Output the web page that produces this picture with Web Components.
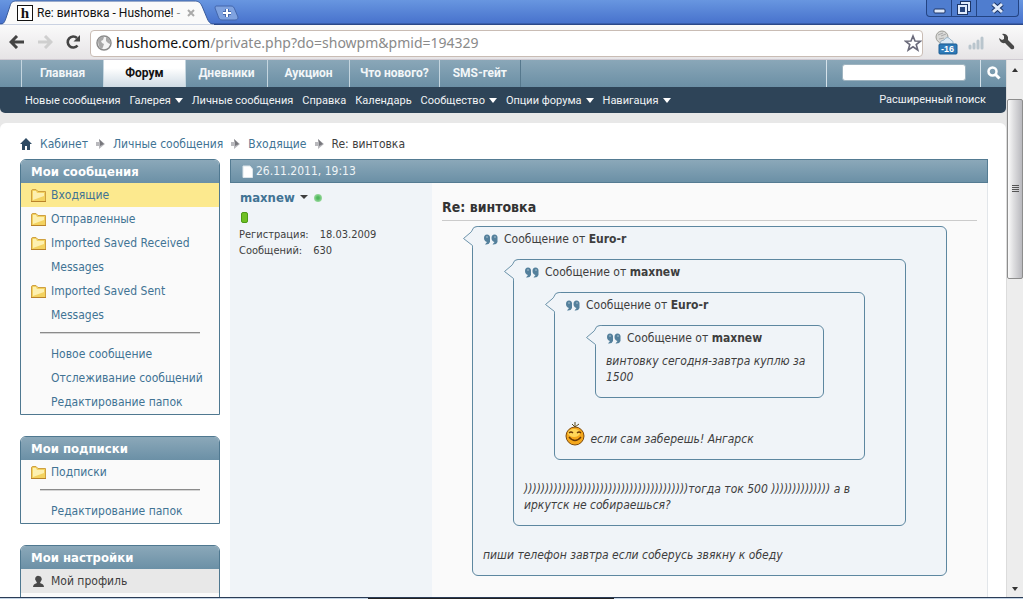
<!DOCTYPE html>
<html lang="ru">
<head>
<meta charset="utf-8">
<title>Re: винтовка - Hushome!</title>
<style>
html,body{margin:0;height:100%}
body{font:12px/16px "DejaVu Sans Condensed","DejaVu Sans",sans-serif;color:#3e3e3e;overflow:hidden}
</style>
</head>
<body>
<app-window></app-window>
<script>
const define = (name, css, html) => customElements.define(name, class extends HTMLElement {
  constructor() {
    super();
    this.attachShadow({mode: 'open'}).innerHTML =
      `<style>*{box-sizing:border-box}a{color:inherit;text-decoration:none}button{border:0;background:none;padding:0;font:inherit;color:inherit}svg{display:block}${css}</style>${html}`;
  }
});

/* ---------- browser chrome ---------- */
define('tab-strip', `
:host{display:flex;height:25px;background:linear-gradient(#6896e0,#4873cd 23px,#2b4888 24px,#2b4888);font:12px/16px Roboto,sans-serif;color:#111}
.tab{position:relative;width:214px;height:25px;display:flex;align-items:center;padding-left:17px}
.tab>svg.shape{position:absolute;left:0;top:0}
.tab>*{position:relative}
.fav{width:16px;height:16px;border:1px solid #111;background:#fff;margin-right:4px;display:grid;place-items:center;font:bold 15px/14px "Liberation Serif",serif}
.title{width:146px;white-space:nowrap}
.title i{font-style:normal;color:#888}
.x{width:10px;margin-left:4px}
.new{align-self:center}
.win{margin-left:auto;margin-right:4px;display:flex;height:17px;border:1px solid #234483;border-top:0;border-radius:0 0 4px 4px;background:#4f7dcf}
.win button{width:25px;height:16px;display:grid;place-items:center;border-right:1px solid #234483}
.win button:last-child{width:41px;border:0}`, `
<div class="tab">
<svg class="shape" width="214" height="25"><path d="M0 25C4 24 5 21 6 18L10 6C11 2 13 1 17 1H194C198 1 200 2 202 6L207 18C208 21 210 24 214 25Z" fill="#fafafa" stroke="#3a5c9c"/><path d="M0 24.5H214V26H0Z" fill="#fafafa"/></svg>
<span class="fav">h</span><span class="title">Re: винтовка - Hushome! <i>-</i></span>
<button class="x" aria-label="Закрыть вкладку"><svg width="8" height="8"><path d="M1 1L7 7M7 1L1 7" stroke="#aaa" stroke-width="2"/></svg></button></div>
<button class="new" aria-label="Новая вкладка"><svg width="27" height="16" viewBox="0 0 27 16"><path d="M2 1H17C19 1 20 2 21 5L24 12C24 14 23 15 21 15H8C6 15 5 14 4 11L1 3Q1 1 2 1" fill="#7fa2df" stroke="#4467ac"/><path d="M13 4V12M9 8H17" stroke="#4467ac" stroke-width="4"/><path d="M13 4V12M9 8H17" stroke="#fff" stroke-width="2"/></svg></button>
<div class="win">
<button aria-label="Свернуть"><svg width="13" height="12"><rect x="1" y="7" width="11" height="4" rx="1" fill="#dfeafb" stroke="#1c3567"/></svg></button>
<button aria-label="Восстановить"><svg width="14" height="14"><path d="M5 4V2H12V9H9" fill="none" stroke="#1c3567" stroke-width="4"/><path d="M5 4V2H12V9H9" fill="none" stroke="#dfeafb" stroke-width="2"/><rect x="2" y="5" width="7" height="7" fill="none" stroke="#1c3567" stroke-width="4"/><rect x="2" y="5" width="7" height="7" fill="#27457f" stroke="#dfeafb" stroke-width="2"/></svg></button>
<button aria-label="Закрыть"><svg width="13" height="12"><path d="M2 2L11 10M11 2L2 10" stroke="#1c3567" stroke-width="5"/><path d="M2 2L11 10M11 2L2 10" stroke="#dfeafb" stroke-width="3"/></svg></button>
</div>`);

define('tool-bar', `
:host{display:flex;align-items:center;height:35px;background:linear-gradient(#fafafa,#e6e4e6);padding-left:9px;padding-right:7px;border-bottom:1px solid #cfcad2}
.back{margin-right:12px}.fwd{margin-right:12px}.rel{margin-right:9px}
.omni{flex:1;height:27px;margin-top:2px;display:flex;align-items:center;border:1px solid #c9bcb4;border-radius:4px;background:#fff;padding:0 0 0 5px}
.url{flex:1;margin:0 4px;font:14px/22px "Noto Sans",sans-serif;color:#8a8a8a;white-space:nowrap}
.url b{font-weight:400;color:#111}
.ext{margin-left:11px}.bars{margin-left:10px}.wr{margin-left:14px}
.ext text{font:bold 9px "Liberation Sans",sans-serif;fill:#fff}`, `
<button class="back" aria-label="Назад"><svg width="16" height="14"><path d="M8 1L2 7L8 13M2 7H15" fill="none" stroke="#444" stroke-width="3"/></svg></button>
<button class="fwd" aria-label="Вперёд"><svg width="16" height="14"><path d="M8 1L14 7L8 13M14 7H1" fill="none" stroke="#cfcfcf" stroke-width="3"/></svg></button>
<button class="rel" aria-label="Обновить"><svg width="16" height="16"><path d="M12.500 11.500A5.500 5.500 0 1 1 12 4" fill="none" stroke="#444" stroke-width="2.600"/><path d="M15 1V7.500H8.500Z" fill="#444"/></svg></button>
<div class="omni">
<svg width="16" height="16"><circle cx="8" cy="8" r="7" fill="#f4f4f4" stroke="#8b8b8b" stroke-width="1.500"/><path d="M2 5C4 2 7 1 8 2L7 5L5 6L6 8L8 9L7 12L6 14C3 13 2 9 2 5M10 2C13 3 15 6 14 9L12 8L10 6Z" fill="#a8a8a8"/></svg>
<div class="url"><b>hushome.com</b>/private.php?do=showpm&amp;pmid=194329</div>
<button aria-label="В закладки"><svg width="18" height="18"><path d="M9 2L11 7L16.500 7.200L12.200 10.600L13.800 16L9 12.800L4.200 16L5.800 10.600L1.500 7.200L7 7Z" fill="#fff" stroke="#6a6a7a" stroke-width="1.600"/></svg></button>
</div>
<button class="ext" aria-label="Погода"><svg width="24" height="26"><circle cx="8" cy="8" r="6" fill="#d8d8d6" stroke="#9c9c96"/><path d="M4 6L9 4M5 10L10 9M7 7L12 5" stroke="#aaa"/><path d="M6 15Q6 11 10 11Q13 6 17 11Q20 12 19 15Z" fill="#dceaf5" stroke="#9bb6c9"/><rect x="5" y="15" width="18" height="10" rx="1" fill="#2d7ab8" stroke="#1c5d93"/><text x="7" y="23">-16</text></svg></button>
<button class="bars" aria-label="Уровень"><svg width="16" height="16"><path d="M2 12V14M6 10V14M10 7V14M14 4V14" stroke="#b9c5cd" stroke-width="3" stroke-linecap="round"/></svg></button>
<button class="wr" aria-label="Настройки"><svg width="18" height="18"><path d="M4 1Q8 0 10 4L10 7L16 13Q17 17 13 16L7 10Q2 11 1 5L4 7L6 6L6 3Z" fill="#484848"/></svg></button>`);

define('scroll-bar', `
:host{display:flex;flex-direction:column;align-items:center;width:17px;background:#ededed;border-left:1px solid #dcdcdc}
.up{padding:8px 0}.down{margin-top:auto;padding-bottom:6px}
.thumb{width:16px;height:180px;margin-top:19px;border:1px solid #8d8d8d;border-radius:2px;background:linear-gradient(90deg,#fafafa,#dedee0 40%,#b9b9be);display:grid;place-items:center}`, `
<svg class="up" width="6" height="20" viewBox="0 0 6 4"><path d="M0 4L3 0L6 4Z" fill="#333"/></svg>
<div class="thumb"><svg width="7" height="8"><path d="M0 .5H7M0 2.500H7M0 4.500H7M0 6.500H7" stroke="#555"/></svg></div>
<svg class="down" width="6" height="10" viewBox="0 0 6 4"><path d="M0 0H6L3 4Z" fill="#333"/></svg>`);

/* ---------- forum header ---------- */
define('main-nav', `
:host{display:flex;height:27px;padding-left:21px;background:linear-gradient(#8aa7b8,#6b8fa5);font:bold 12px/27px Roboto,sans-serif;color:#f2f6f8}
a{min-width:82px;padding:0 10px;text-align:center;border-left:1px solid #c4d5df}
a.on{color:#111;background:linear-gradient(#fff,#fff 30%,#cfdbe4)}
a:last-of-type{border-right:1px solid #56788d}
form{margin-left:auto;display:flex;border-left:1px solid #d5e2ea;padding-left:15px}
input{width:124px;height:17px;margin:4px 14px 0 0;border:1px solid #9fb4c0;border-radius:3px;background:#fff;padding:0 4px}
button{width:26px;border-left:1px solid #d5e2ea;display:grid;place-items:center}`, `
<a href="#">Главная</a><a href="#" class="on">Форум</a><a href="#">Дневники</a><a href="#">Аукцион</a><a href="#">Что нового?</a><a href="#">SMS-гейт</a>
<form><input type="search" aria-label="Поиск"><button aria-label="Найти"><svg width="14" height="16"><circle cx="5.500" cy="5.500" r="4" fill="none" stroke="#fff" stroke-width="2.500"/><path d="M8.500 8.500L12.500 12.500" stroke="#fff" stroke-width="3"/></svg></button></form>`);

define('sub-nav', `
:host{display:flex;gap:9px;height:26px;padding:0 20px 0 25px;background:#2e4458;border-radius:0 0 5px 5px;font:11px/27px Roboto,sans-serif;color:#f0f3f5;white-space:nowrap}
.m::after{content:"";display:inline-block;margin-left:4px;border:4px solid transparent;border-top:5px solid #fff;border-bottom:0;vertical-align:1px}
.adv{margin-left:auto;line-height:25px}`, `
<a href="#">Новые сообщения</a><a href="#" class="m">Галерея</a><a href="#">Личные сообщения</a><a href="#">Справка</a><a href="#">Календарь</a><a href="#" class="m">Сообщество</a><a href="#" class="m">Опции форума</a><a href="#" class="m">Навигация</a><a href="#" class="adv">Расширенный поиск</a>`);

define('crumb-trail', `
:host{display:flex;align-items:center;height:18px;color:#417394}
a,span{white-space:nowrap}
.home{margin-right:8px}.sep{margin:0 8px}span{color:#3e3e3e}`, `
<a href="#" class="home" aria-label="Домой"><svg width="12" height="12"><path d="M6 0L12 6H10V12H7V8H5V12H2V6H0Z" fill="#2d4a63"/></svg></a>
${['Кабинет','Личные сообщения','Входящие'].map(t => `<a href="#">${t}</a><svg class="sep" width="9" height="10"><path d="M0 3H3V0L9 5L3 10V7H0Z" fill="#b9b9bd"/><path d="M3 0L8 5L4 7V3Z" fill="#77777c"/></svg>`).join('')}
<span>Re: винтовка</span>`);

/* ---------- sidebar ---------- */
define('side-panel', `
:host{display:block;margin-bottom:21px;border:1px solid #4f7890;border-radius:6px 6px 0 0;background:#fafafa}
h2{margin:0;height:23px;padding-left:10px;border-radius:5px 5px 0 0;background:linear-gradient(#8ba8b9,#6b90a6);font:bold 13px/23px "DejaVu Sans Condensed","DejaVu Sans",sans-serif;color:#fff}`,
`<h2><slot name="title"></slot></h2><slot></slot>`);

const folder = '<svg width="15" height="13"><path d="M.5 2Q.5 .5 2 .5H5L7 2.500H14.500V12.500H.5Z" fill="#f3d260" stroke="#cfa040"/><path d="M2 2H5L6 4H13V7L2 11Z" fill="#fdf0b0"/><path d="M0 12.500H15" stroke="#b9822a"/></svg>';
const person = '<svg width="15" height="13"><path d="M8 1A3 3 0 0 1 10 6L9 8Q13 9 13 12H2Q2 9 6 8L5 6A3 3 0 0 1 8 1" fill="#4a4a4a"/></svg>';
customElements.define('side-link', class extends HTMLElement {
  constructor() {
    super();
    const icon = this.getAttribute('icon');
    this.attachShadow({mode: 'open'}).innerHTML = `<style>
:host{display:block;color:#417394}
:host([current]){background:#fce98e}
:host([shade]){background:#e8e8e8;color:#3e3e3e}
a{display:grid;grid-template-columns:15px 1fr;column-gap:5px;padding:0 8px 0 10px;line-height:24px;color:inherit;text-decoration:none}
span{grid-column:2}svg{display:block;margin-top:6px}</style>
<a href="#">${icon === 'folder' ? folder : icon === 'person' ? person : ''}<span><slot></slot></span></a>`;
  }
});
define('side-rule', `:host{display:block;padding:5px 19px 8px}hr{margin:0;border:0;height:2px;background:linear-gradient(#8b8b8b 50%,#d4d4d4 50%)}`, `<hr>`);

/* ---------- message ---------- */
define('quote-box', `
:host{display:block;position:relative;margin:5px 30px 21px;padding:2px 10px 12px;border:1px solid #5d87a0;border-radius:6px;background:#f0f4f8}
::slotted(quote-box){margin-top:10px}
.tail{position:absolute;left:-11px;top:-1px}
header{display:flex;align-items:center;height:20px;margin-bottom:5px;padding-left:1px;font-style:normal;white-space:pre}
header svg{margin-right:6px}`, `
<svg class="tail" width="17" height="22"><path d="M17 .5H15Q11 .5 10 5L1.500 12.500L10 19.500V22H17Z" fill="#f0f4f8"/><path d="M17 .5H15Q11 .5 10 4.500Q9.500 6 8 7L1.500 12.500L10.500 19.500V22" fill="none" stroke="#6c93aa"/></svg>
<header><svg width="14" height="11"><path d="M3 .5A3 3 0 0 1 6 4V8Q5 11 1 10.500L3 8Q0 7 0 4Q0 .5 3 .5M10.500 .5A3 3 0 0 1 13.500 4V8Q12.500 11 8.500 10.500L10.500 8Q7.500 7 7.500 4Q7.500 .5 10.500 .5" fill="#54809c"/><path d="M2 3H4M10 3H12" stroke="#a6c0cf"/></svg>Сообщение от <b><slot name="author"></slot></b></header><slot></slot>`);

define('reply-line', `:host{display:block;margin-top:33px}`, `<slot></slot>`);
define('smile-icon', `:host{display:inline-block;margin-right:2px;height:16px;vertical-align:top}svg{margin-top:-9px}`, `
<svg width="20" height="24"><path d="M10 5L7 2M10 5V0M10 5L14 2" stroke="#5b4a1c" fill="none"/><circle cx="10" cy="14" r="9" fill="#f5a81c" stroke="#7e4a0a"/><ellipse cx="9" cy="11" rx="6" ry="4" fill="#ffd75a"/><path d="M4 11Q6 9 8 11M12 11Q14 9 16 11M4 15Q10 22 16 15" fill="none" stroke="#6b3a06" stroke-width="1.300"/></svg>`);

define('user-card', `
:host{display:block;width:202px;padding:7px 9px;background:#f0f4f8;font-size:11px}
.n{display:flex;align-items:center;height:16px;padding-left:1px;font-weight:bold;font-size:13px;color:#417394}
.n i{margin:0 6px 3px 5px;border:4px solid transparent;border-top:4px solid #3e3e3e;border-bottom:0}
.n u{width:8px;height:8px;border-radius:4px;background:radial-gradient(#4fb85c 20%,#c7ecc6)}
.p{width:7px;height:11px;margin:6px 2px 4px;border:1px solid #4d9a17;border-radius:2px;background:#6fc024}
dl{margin:0}dl div{display:flex;gap:11px}dd{margin:0}`, `
<a href="#" class="n">maxnew<i></i><u></u></a><div class="p"></div>
<dl><div><dt>Регистрация:</dt><dd>18.03.2009</dd></div><div><dt>Сообщений:</dt><dd>630</dd></div></dl>`);

define('pm-post', `
:host{display:flex;flex-direction:column;flex:1;min-width:0}
.h{flex:none;height:24px;display:flex;align-items:center;gap:3px;padding-left:11px;border:1px solid #547b92;background:linear-gradient(#8ba8b9,#6b90a6);color:#eef3f6}
.b{flex:1;display:flex;background:#fafafa;border-right:1px solid #e2e6ea}
.c{flex:1;min-width:0;padding:15px 10px 0}
h1{margin:0;height:23px;border-bottom:1px solid #cbcbcb;font-weight:bold;font-size:14px;line-height:18px;color:#333}
.t{font-style:italic}`, `
<div class="h"><svg width="11" height="13"><path d="M1 1H8L10.500 4V12.500H1Z" fill="#fff" stroke="#dce5ea"/></svg><slot name="date"></slot></div>
<div class="b"><user-card></user-card><article class="c"><h1><slot name="title"></slot></h1><div class="t"><slot></slot></div></article></div>`);

define('app-window', `
:host{display:flex;flex-direction:column;height:100vh;overflow:hidden}
.view{flex:1;min-height:0;display:flex}
.page{flex:1;min-width:0;overflow:hidden;display:flex;flex-direction:column;background:#e8e8e8}
.sheet{flex:1 0 0;min-height:0;margin-top:10px;border-radius:6px 6px 0 0;background:#fff;padding:12px 18px 0 20px;display:flex;flex-direction:column;overflow:hidden}
.cols{flex:1;min-height:0;display:flex;gap:10px;margin-top:6px}
aside{width:200px;flex:none}
.edge{height:2px;flex:none;border-top:1px solid #2a3c56;background:linear-gradient(90deg,#c3d3e4 36%,#222 36%,#222 60%,#c3d3e4 60%)}`, `
<tab-strip></tab-strip><tool-bar></tool-bar>
<div class="view"><div class="page"><main-nav></main-nav><sub-nav></sub-nav>
<main class="sheet"><crumb-trail></crumb-trail>
<div class="cols"><aside>
<side-panel><span slot="title">Мои сообщения</span>
<side-link icon="folder" current>Входящие</side-link><side-link icon="folder">Отправленные</side-link><side-link icon="folder">Imported Saved Received Messages</side-link><side-link icon="folder">Imported Saved Sent Messages</side-link>
<side-rule></side-rule><side-link>Новое сообщение</side-link><side-link>Отслеживание сообщений</side-link><side-link>Редактирование папок</side-link></side-panel>
<side-panel><span slot="title">Мои подписки</span><side-link icon="folder">Подписки</side-link><side-rule></side-rule><side-link>Редактирование папок</side-link></side-panel>
<side-panel><span slot="title">Мои настройки</span><side-link icon="person" shade>Мой профиль</side-link><side-rule></side-rule></side-panel>
</aside>
<pm-post><span slot="date">26.11.2011, 19:13</span><span slot="title">Re: винтовка</span>
<quote-box><span slot="author">Euro-r</span><quote-box><span slot="author">maxnew</span><quote-box><span slot="author">Euro-r</span><quote-box><span slot="author">maxnew</span>винтовку сегодня-завтра куплю за 1500</quote-box><reply-line><smile-icon></smile-icon> если сам заберешь! Ангарск</reply-line></quote-box>)))))))))))))))))))))))))))))))))))))))тогда ток 500 )))))))))))))) а в иркутск не собираешься?</quote-box>пиши телефон завтра если соберусь звякну к обеду</quote-box>
</pm-post></div></main></div><scroll-bar></scroll-bar></div><div class="edge"></div>`);
</script>
</body>
</html>
